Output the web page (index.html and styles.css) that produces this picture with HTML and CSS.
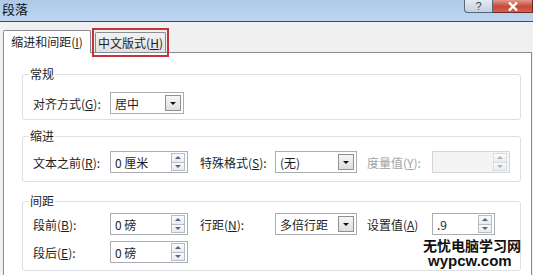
FILE: index.html
```html
<!DOCTYPE html>
<html lang="zh">

<head>
    <meta charset="UTF-8">
    <meta name="viewport" content="width=device-width, initial-scale=1.0">
    <title>段落</title>
    <link rel="stylesheet" href="styles.css">
</head>

<body>
    <div class="dialog">
        <div class="titlebar">
            <span class="title">段落</span>
            <div class="caption-buttons">
                <span class="btn-help">?</span>
                <span class="btn-close">
                    <svg width="12" height="9" viewBox="0 0 12 9">
                        <path d="M2 0.5 L10 8.5 M10 0.5 L2 8.5" stroke="#fff" stroke-width="2.4" />
                    </svg>
                </span>
            </div>
        </div>

        <div class="tabs">
            <div class="tab active">缩进和间距(<u>I</u>)</div>
            <div class="tab marked">中文版式(<u>H</u>)</div>
        </div>

        <div class="panel">
            <!-- 常规 -->
            <fieldset class="group general">
                <legend>常规</legend>
                <div class="row">
                    <span class="lbl first">对齐方式(<u>G</u>):</span>
                    <div class="combo w74"><span class="val">居中</span><span class="drop"></span></div>
                </div>
            </fieldset>

            <!-- 缩进 -->
            <fieldset class="group indent">
                <legend>缩进</legend>
                <div class="row">
                    <span class="lbl first">文本之前(<u>R</u>):</span>
                    <div class="spin w78"><span class="val">0 厘米</span><span class="arrows"><i class="up"></i><i class="down"></i></span></div>
                    <span class="lbl mid">特殊格式(<u>S</u>):</span>
                    <div class="combo w82"><span class="val">(无)</span><span class="drop"></span></div>
                    <span class="lbl last disabled">度量值(<u>Y</u>):</span>
                    <div class="spin w78 off"><span class="val"></span><span class="arrows"><i class="up"></i><i class="down"></i></span></div>
                </div>
            </fieldset>

            <!-- 间距 -->
            <fieldset class="group spacing">
                <legend>间距</legend>
                <div class="row">
                    <span class="lbl first">段前(<u>B</u>):</span>
                    <div class="spin w78"><span class="val">0 磅</span><span class="arrows"><i class="up"></i><i class="down"></i></span></div>
                    <span class="lbl mid">行距(<u>N</u>):</span>
                    <div class="combo w82"><span class="val">多倍行距</span><span class="drop"></span></div>
                    <span class="lbl last">设置值(<u>A</u>)</span>
                    <div class="spin w63"><span class="val">.9</span><span class="arrows"><i class="up"></i><i class="down"></i></span></div>
                </div>
                <div class="row">
                    <span class="lbl first">段后(<u>E</u>):</span>
                    <div class="spin w78"><span class="val">0 磅</span><span class="arrows"><i class="up"></i><i class="down"></i></span></div>
                </div>
            </fieldset>
        </div>

        <div class="watermark">
            <div class="wm-cn">无忧电脑学习网</div>
            <div class="wm-en">wypcw.com</div>
        </div>
    </div>
</body>

</html>
```

FILE: styles.css
```css
* {
    box-sizing: border-box;
    margin: 0;
    padding: 0;
}

body {
    width: 533px;
    height: 275px;
    overflow: hidden;
    background-color: #f0f0f0;
    font-family: "Noto Sans CJK SC", "Liberation Sans", sans-serif;
    font-size: 12px;
    color: #1e1e1e;
}

u {
    text-decoration: underline;
    text-underline-offset: 1px;
}

.dialog {
    position: relative;
    height: 275px;
    display: flex;
    flex-direction: column;
}

/* Title bar */
.titlebar {
    height: 22px;
    display: flex;
    justify-content: space-between;
    background: linear-gradient(#aecae8, #bdd5ef);
    border-bottom: 1px solid #3e4c60;
}

.title {
    font-size: 13px;
    line-height: 18px;
    padding-left: 2px;
    color: #111;
}

.caption-buttons {
    display: flex;
    height: 13px;
}

.btn-help {
    width: 29px;
    text-align: center;
    font-family: "Liberation Sans", sans-serif;
    font-size: 11px;
    line-height: 12px;
    color: #3a4556;
    background: linear-gradient(#e4eaf1, #c6d1dd);
    border: 1px solid #56667a;
    border-top: 0;
    border-radius: 0 0 0 4px;
}

.btn-close {
    width: 40px;
    display: flex;
    justify-content: center;
    align-items: center;
    background: linear-gradient(#e0978b, #c64a38 55%, #d4604c);
    border: 1px solid #6d2a22;
    border-top: 0;
    border-left: 0;
}

/* Tabs */
.tabs {
    height: 30px;
    display: flex;
    align-items: flex-end;
    padding-left: 3px;
}

.tab {
    position: relative;
    text-align: center;
    border: 1px solid #898c95;
    border-bottom: 0;
    border-radius: 2px 2px 0 0;
}

.tab.active {
    z-index: 1;
    width: 88px;
    height: 23px;
    margin-bottom: -1px;
    line-height: 22px;
    background-color: #fff;
}

.tab.marked {
    width: 71px;
    height: 20px;
    margin-left: 4px;
    line-height: 19px;
    background: linear-gradient(#f2f2f2, #e1e1e1);
}

/* red highlight drawn over the second tab */
.tab.marked::after {
    content: "";
    position: absolute;
    top: -5px;
    left: -4px;
    right: -4px;
    bottom: -5px;
    border: 2px solid #c3333a;
}

/* Tab page */
.panel {
    flex: 1;
    margin: 0 1px 0 3px;
    padding: 14px 10px 0 18px;
    background-color: #fff;
    border: 1px solid #898c95;
    border-bottom: 0;
}

.group {
    border: 1px solid #dcdfe3;
    border-radius: 3px;
    padding: 0 0 0 10px;
}

.group legend {
    margin-left: -4px;
    padding: 0 1px;
    line-height: 14px;
    font-size: 12px;
}

.general {
    padding-top: 11px;
    padding-bottom: 5px;
}

.indent {
    margin-top: 9px;
    padding-top: 8px;
    padding-bottom: 8px;
}

.spacing {
    margin-top: 12px;
    padding-top: 5px;
    padding-bottom: 7px;
}

.row {
    height: 22px;
    display: flex;
    align-items: center;
}

.row + .row {
    margin-top: 6px;
}

.lbl {
    white-space: nowrap;
}

.lbl.first {
    width: 77px;
}

.lbl.mid {
    width: 75px;
    margin-left: 12px;
}

.lbl.last {
    width: 65px;
    margin-left: 10px;
}

.lbl.disabled {
    color: #a3a3a3;
}

/* Combo boxes and spinners */
.combo,
.spin {
    height: 22px;
    display: flex;
    align-items: center;
    border: 1px solid #abadb3;
    background-color: #fff;
}

.w63 { width: 63px; }
.w74 { width: 74px; }
.w78 { width: 78px; }
.w82 { width: 82px; }

.val {
    flex: 1;
    padding-left: 4px;
    white-space: nowrap;
}

.drop {
    position: relative;
    width: 16px;
    height: 16px;
    margin-right: 2px;
    border: 1px solid #8d9096;
    background: linear-gradient(#f6f6f6, #dedede);
}

.drop::after {
    content: "";
    position: absolute;
    left: 4px;
    top: 6px;
    border-left: 3px solid transparent;
    border-right: 3px solid transparent;
    border-top: 3px solid #111;
}

.arrows {
    width: 14px;
    height: 18px;
    margin-right: 2px;
    display: flex;
    flex-direction: column;
}

.arrows i {
    flex: 1;
    position: relative;
    border: 1px solid #b7bcc6;
    background: linear-gradient(#fbfbfb, #e8ebef);
}

.arrows i + i {
    border-top: 0;
}

.arrows i::after {
    content: "";
    position: absolute;
    left: 3px;
    top: 2px;
    border-left: 3px solid transparent;
    border-right: 3px solid transparent;
}

.arrows .up::after {
    border-bottom: 3px solid #56657f;
}

.arrows .down::after {
    border-top: 3px solid #56657f;
}

.spin.off {
    border-color: #d4d6da;
    background-color: #f4f4f4;
}

.spin.off .arrows i {
    border-color: #dadde2;
}

.spin.off .arrows i::after {
    opacity: 0.45;
}

/* Site watermark over the screenshot */
.watermark {
    position: absolute;
    left: 423px;
    top: 237px;
    font-weight: bold;
    color: #111;
}

.wm-cn {
    font-size: 14px;
    line-height: 17px;
}

.wm-en {
    font-family: "Liberation Sans", sans-serif;
    font-size: 15px;
    line-height: 14px;
    padding-left: 5px;
}
```
